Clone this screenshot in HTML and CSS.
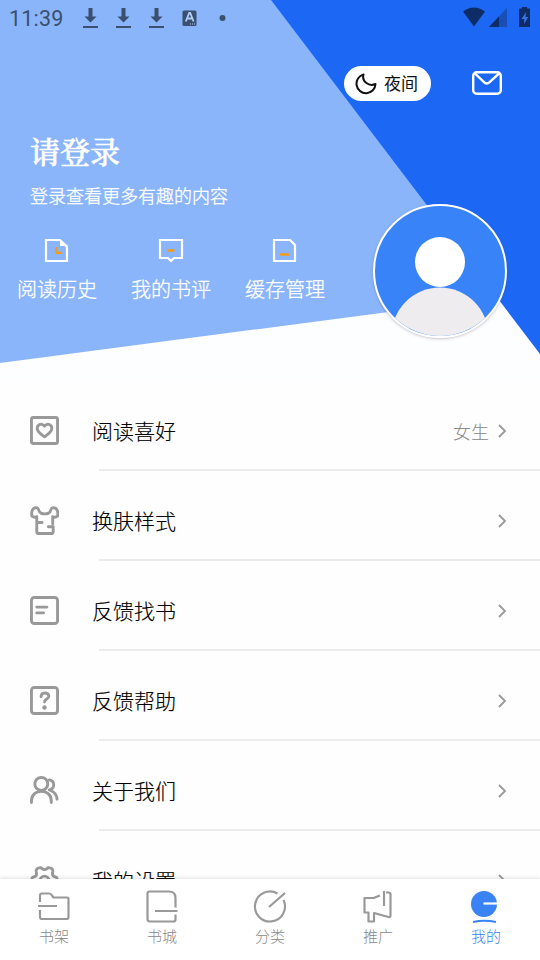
FILE: index.html
```html
<!DOCTYPE html>
<html lang="zh-CN">
<head>
<meta charset="utf-8">
<title>我的</title>
<link rel="stylesheet" href="styles.css">
</head>
<body>
<header class="hero">
  <svg class="hero-bg" viewBox="0 0 540 380"><path fill="#fdfeff" d="M0 0h540v380H0z"/><path fill="#8ab5fb" d="M0 0h300l210 296L0 363z"/><path fill="#1c68f5" d="M271 0h269v354z"/></svg>
  <div class="status">
    <span class="clock">11:39</span>
    <svg class="status-left" width="160" height="24" viewBox="0 0 160 24" fill="#3b506e"><g id="dl"><path d="M5.500 1h4v8.500h4l-6 6-6-6h4z"/><path d="M0 19h15v2H0z"/></g><use href="#dl" x="33"/><use href="#dl" x="66"/><rect x="99.500" y="3.500" width="14" height="15.500" rx="1.500"/><path d="m102.800 14.500 3.400-8.500h1l3.400 8.500m-6.500-3h5.200" fill="none" stroke="#b0cdf8" stroke-width="1.800"/><path d="M107 16.500h1v1h-1zm2 0h1v1h-1zm2 0h1v1h-1z" fill="#b0cdf8"/><circle cx="139.500" cy="11" r="3"/></svg>
    <svg class="status-right" width="70" height="24" viewBox="0 0 70 24" fill="#0e2c66"><path d="M2 5.500q11-8 22 0L13 20.500z"/><path d="M46 2v19H28z" fill="#194fb4"/><path d="M38 10.500V21H28z"/><path d="M61 1h5v1.500h3V21H58V2.500h3z"/><path d="m65 6-4.500 7h2.700v5l4-7h-2.700z" fill="#3974e6"/></svg>
  </div>
  <div class="tools">
    <button class="night"><svg width="22" height="22" viewBox="0 0 22 22" fill="none" stroke="#111" stroke-width="2" stroke-linejoin="round"><path d="M8.500 1.500A9.500 9.500 0 1 0 20.500 11C14 14 6.500 8.500 8.500 1.500z"/></svg><span>夜间</span></button>
    <svg class="mail" width="32" height="26" viewBox="0 0 32 26" fill="none" stroke="#fff" stroke-width="2.400"><rect x="2.200" y="2.200" width="27.600" height="21.600" rx="3.500"/><path d="m4 3.500 9 8.700q2.800 2.600 5.600 0L28 3.500"/></svg>
  </div>
  <h1>请登录</h1>
  <p class="sub">登录查看更多有趣的内容</p>
  <nav class="quick">
    <a><svg width="26" height="26" viewBox="0 0 26 26"><path d="M2 2h14l7 7v14H2z" fill="none" stroke="#fff" stroke-width="2.200"/><path d="M16 1v7h8z" fill="#fff"/><path d="M12.500 9v5.700H18" fill="none" stroke="#f39a1c" stroke-width="2.400"/></svg><span>阅读历史</span></a>
    <a><svg width="26" height="26" viewBox="0 0 26 26"><path d="M2 2h22v18h-8l-3 3-3-3H2z" fill="none" stroke="#fff" stroke-width="2.200"/><path d="M9.500 12.500h7" stroke="#f39a1c" stroke-width="2.500"/></svg><span>我的书评</span></a>
    <a><svg width="26" height="26" viewBox="0 0 26 26"><path d="M2 2h16l5 5v16H2z" fill="none" stroke="#fff" stroke-width="2.200"/><path d="M8 16.500h9" stroke="#f39a1c" stroke-width="2.500"/></svg><span>缓存管理</span></a>
  </nav>
  <div class="avatar"><svg viewBox="0 0 130 130"><circle cx="65" cy="56" r="25" fill="#fff"/><circle cx="65" cy="130" r="48.500" fill="#eeecee"/></svg></div>
</header>
<main class="list">
  <div class="row"><svg class="icon" viewBox="0 0 30 30"><rect x="1.500" y="1.500" width="27" height="27" rx="2"/><path d="M15 10.500C12 6.500 7 9 7.500 13.500 8 17 12.500 19.500 15 21.500c2.500-2 7-4.500 7.500-8 .5-4.500-4.500-7-7.500-3z"/></svg><span class="label">阅读喜好</span><span class="value">女生</span><svg class="chev" viewBox="0 0 10 16"><path d="m2 2 6 6-6 6"/></svg></div>
  <div class="row"><svg class="icon" viewBox="0 0 30 30"><path d="M7.500 2C2.500 1 1 6 2 10.500q2.500 2 5 .5V26q0 2.500 2.500 2.500h12Q24 28.500 24 26v-4.500h-5M23.500 18.500V11q2.500 1.500 5-.5C29.500 6 28 1 23 2c-2 .5-1 4.500-4 5.500-2.500.8-5 .8-7.500 0C8.500 6.500 9.500 2.500 7.500 2M7 17h5.500"/></svg><span class="label">换肤样式</span><svg class="chev" viewBox="0 0 10 16"><path d="m2 2 6 6-6 6"/></svg></div>
  <div class="row"><svg class="icon" viewBox="0 0 30 30"><rect x="1.500" y="1.500" width="27" height="27" rx="3"/><path d="M7 11.500h10.500M7 17.500h7"/></svg><span class="label">反馈找书</span><svg class="chev" viewBox="0 0 10 16"><path d="m2 2 6 6-6 6"/></svg></div>
  <div class="row"><svg class="icon" viewBox="0 0 30 30"><rect x="1.500" y="1.500" width="27" height="27" rx="3"/><path d="M11.500 11c0-5 8-5 8-.5 0 3-4.500 3-4.500 6"/><circle cx="15" cy="22.300" r="2.300" fill="#999" stroke="none"/></svg><span class="label">反馈帮助</span><svg class="chev" viewBox="0 0 10 16"><path d="m2 2 6 6-6 6"/></svg></div>
  <div class="row"><svg class="icon" viewBox="0 0 30 30"><circle cx="11.700" cy="8.200" r="6.700"/><path d="M1.500 27.500v-2c0-13 20.500-13 20.500 0v2M20 4c6 1 6 9 0 10.500M21.500 15q6 2.500 6.500 9"/></svg><span class="label">关于我们</span><svg class="chev" viewBox="0 0 10 16"><path d="m2 2 6 6-6 6"/></svg></div>
  <div class="row"><svg class="icon" viewBox="0 0 30 30"><path d="M2 13.500q0-2 2.500-2.500Q7.500 10 6.500 6 6 2.500 9.500 2q2-.5 3 .8 2.500 1.700 5 0 1-1.300 3-.8Q24 2.500 23.500 6q-1 4 2 5 2.500.5 2.500 2.500-2.500 2-.5 5-1.500 1-3 2.500.5 6-4 7-3-2-5.500-2T9.500 28q-4.500-1-4-7-1.500-1.500-3-2.500 2-3-.5-5z"/><circle cx="15" cy="15" r="4.500"/></svg><span class="label">我的设置</span><svg class="chev" viewBox="0 0 10 16"><path d="m2 2 6 6-6 6"/></svg></div>
</main>
<nav class="tabs">
  <a><svg viewBox="0 0 34 34"><path d="M3 12V5.500q0-2 2-2h7q2 0 3 2l1.500 2H30q1.500 0 1.500 1.500V27q0 2-2 2H5q-2 0-2-2v-7M1 16h19"/></svg><span>书架</span></a>
  <a><svg viewBox="0 0 34 34"><path d="M30.500 17.500V8q0-6.500-6.500-6.500H4.500q-2 0-2 2V29q0 2.500 2.500 2.500h23.500q2 0 2-2V24.500M10 21h22.500"/></svg><span>书城</span></a>
  <a><svg viewBox="0 0 34 34"><path d="M24.500 3.500A15 15 0 1 0 30.500 10M32 3 16 17"/></svg><span>分类</span></a>
  <a><svg viewBox="0 0 34 34"><path d="M19 5.500 12.500 8H3.500v14.500h4v9h5.500v-8.500l14.500 4q2 .5 2-1.500V4q0-1.500-2-1.500H25M23 1v15"/></svg><span>推广</span></a>
  <a class="active"><svg viewBox="0 0 34 34"><circle cx="15" cy="14" r="13" fill="#3983f5" stroke="none"/><path d="M14.500 13.500H29" stroke="#fff"/><path d="M4 32q11.500-2.500 23 0"/></svg><span>我的</span></a>
</nav>
</body>
</html>
```
FILE: styles.css
```css
* { box-sizing: border-box; }
body {
  margin: 0;
  height: 960px;
  overflow: hidden;
  display: flex;
  flex-direction: column;
  background: #fefefe;
  font-family: "Noto Sans CJK SC", sans-serif;
  font-weight: 300;
}
svg { display: block; flex: none; }
.hero { position: relative; height: 380px; flex: none; color: #fff; }
.hero > * { position: relative; }
.hero .hero-bg { position: absolute; top: 0; left: 0; width: 540px; height: 380px; }
.status { display: flex; align-items: center; height: 36px; padding: 0 9px; }
.clock { width: 74px; padding-top: 2px; font: 21.5px/36px Roboto, sans-serif; letter-spacing: .2px; color: #3b506e; }
.status-left { margin-top: 2px; }
.status-right { margin-left: auto; }
.tools { display: flex; justify-content: flex-end; align-items: center; padding: 30px 37px 0 0; height: 65px; }
.night {
  width: 87px;
  height: 35px;
  display: flex;
  align-items: center;
  gap: 7px;
  padding: 0 0 0 11px;
  border: 0;
  border-radius: 18px;
  background: #fff;
  color: #111;
  font: 17px/24px "Noto Sans CJK SC", sans-serif;
}
.night span { flex: none; margin-top: -1px; }
.mail { margin: -2px 0 0 40px; }
h1 {
  margin: 27px 0 0 30px;
  font: 500 30px/44px "Noto Serif CJK SC", "Noto Sans CJK SC", serif;
  -webkit-text-stroke: .6px #fff;
}
.sub { margin: 10px 0 0 30px; font-size: 18px; line-height: 26px; }
.sub, .quick { -webkit-text-stroke: .3px #fff; }
.quick { display: flex; margin-top: 30px; }
.quick a { width: 114px; display: flex; flex-direction: column; align-items: center; font-size: 20px; line-height: 30px; gap: 10px; }
.hero .avatar {
  position: absolute;
  left: 373px;
  top: 204px;
  width: 134px;
  height: 134px;
  border: 2px solid #fff;
  border-radius: 50%;
  overflow: hidden;
  background: #3983f8;
  box-shadow: 0 1px 3px rgba(80, 60, 80, .3);
}
.list { flex: 1; min-height: 0; overflow: hidden; }
.row { height: 90px; padding: 12px 33px 0 30px; display: flex; align-items: center; position: relative; }
.row::after { content: ""; position: absolute; left: 99px; right: 0; bottom: -1px; height: 2px; background: #ebebeb; }
.icon { width: 29px; height: 29px; margin: -2px 1px 0 0; fill: none; stroke: #999; stroke-width: 3; stroke-linecap: round; stroke-linejoin: round; }
.label { margin: -2px 0 0 32px; font-size: 21px; line-height: 30px; color: #000; -webkit-text-stroke: .15px #000; }
.value { margin-left: auto; margin-right: 8px; font-size: 18px; color: #888; }
.chev { width: 10px; height: 16px; margin-left: auto; fill: none; stroke: #999; stroke-width: 1.8; }
.value + .chev { margin-left: 0; }
.tabs { height: 81px; flex: none; display: flex; position: relative; background: #fff; box-shadow: 0 -1px 4px rgba(0, 0, 0, .12); }
.tabs a { flex: 1; display: flex; flex-direction: column; align-items: center; padding-top: 11px; font-size: 15px; line-height: 22px; gap: 1px; color: #888; }
.tabs svg { width: 34px; height: 34px; fill: none; stroke: #999; stroke-width: 2.2; stroke-linejoin: round; }
.tabs .active { color: #3983f5; }
.tabs .active svg { stroke: #3983f5; }
```
